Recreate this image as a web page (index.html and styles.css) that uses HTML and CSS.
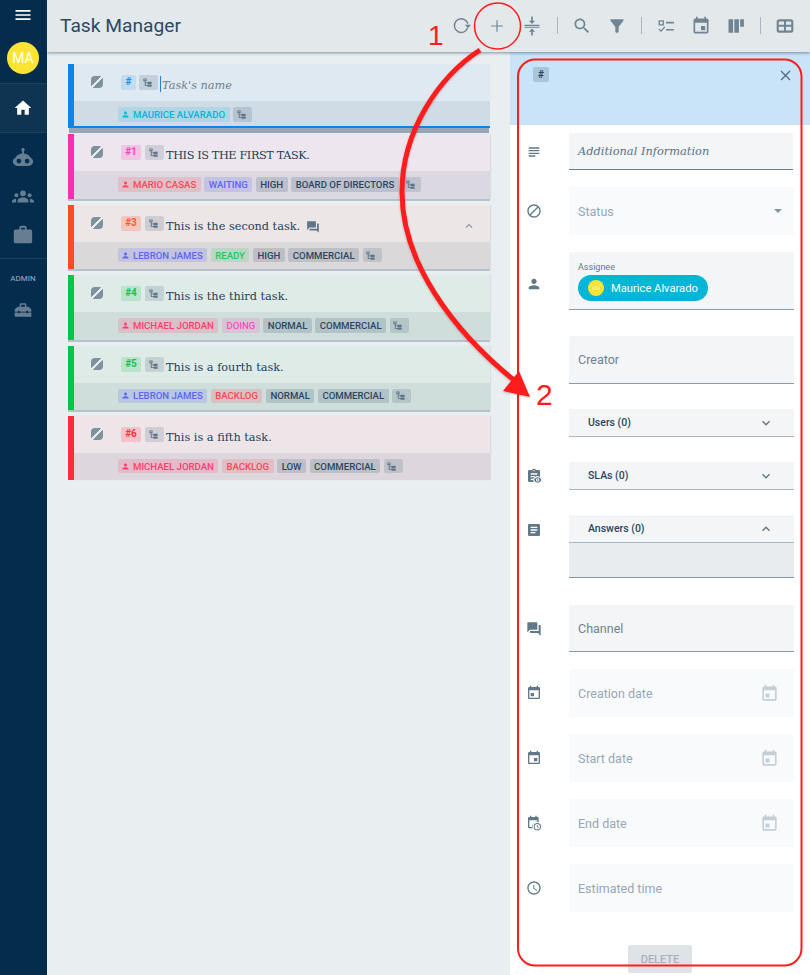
FILE: index.html
```html
<!DOCTYPE html>
<html lang="en">
<head>
<meta charset="utf-8">
<title>Task Manager</title>
<link rel="stylesheet" href="styles.css">
</head>
<body>
<svg class="defs" width="0" height="0" aria-hidden="true">
  <defs>
    <symbol id="i-menu" viewBox="0 0 24 24"><path d="M3 18h18v-2H3v2zm0-5h18v-2H3v2zm0-7v2h18V6H3z"/></symbol>
    <symbol id="i-home" viewBox="0 0 24 24"><path d="M10 20v-6h4v6h5v-8h3L12 3 2 12h3v8z"/></symbol>
    <symbol id="i-robot" viewBox="0 0 24 24"><path fill-rule="evenodd" d="M12 1.200a1.900 1.900 0 0 1 1 3.500V7c3.600.3 6.300 2.200 7.300 4.700 1.600.9 2.700 2.300 2.700 4 0 2.800-2.700 5-6 5H7c-3.300 0-6-2.200-6-5 0-1.700 1.100-3.100 2.700-4C4.700 9.200 7.400 7.300 11 7V4.700a1.900 1.900 0 0 1 1-3.500zM7.500 12.800a2.600 2.600 0 1 0 0 5.200 2.600 2.600 0 0 0 0-5.200zm9 0a2.600 2.600 0 1 0 0 5.200 2.600 2.600 0 0 0 0-5.200z"/></symbol>
    <symbol id="i-groups" viewBox="0 0 24 24"><circle cx="12" cy="8" r="3.200"/><circle cx="4.800" cy="10" r="2.200"/><circle cx="19.200" cy="10" r="2.200"/><path d="M6 18v-1.500c0-2.300 2.700-4 6-4s6 1.700 6 4V18H6zM0 18v-1.300c0-1.500 1.700-2.700 4.500-2.900C4.800 14.500 4.400 15.500 4.400 16.500V18H0zM24 18v-1.300c0-1.500-1.700-2.700-4.500-2.900.3.700.1 1.700.1 2.700V18H24z"/></symbol>
    <symbol id="i-work" viewBox="0 0 24 24"><path d="M20 6h-4V4c0-1.110-.89-2-2-2h-4c-1.110 0-2 .89-2 2v2H4c-1.110 0-1.990.89-1.990 2L2 19c0 1.110.89 2 2 2h16c1.110 0 2-.89 2-2V8c0-1.110-.89-2-2-2zm-6 0h-4V4h4v2z"/></symbol>
    <symbol id="i-toolbox" viewBox="0 0 24 24"><path d="M8 8V5.500C8 4.700 8.700 4 9.500 4h5c.8 0 1.500.7 1.500 1.500V8h2.500L22 11.500V14h-4v-1h-2v1H8v-1H6v1H2v-2.500L5.500 8H8zm1.800 0h4.400V5.800H9.800V8zM2 15h4v1h2v-1h8v1h2v-1h4v5H2v-5z"/></symbol>
    <symbol id="i-tree" viewBox="0 0 24 24"><path d="M3 3h7v6H8v3h4v-1.500h9V15h-9v-1.500H8V18h4v-1.500h9V21h-9v-1.500H6V9H3V3zm2 2v2h3V5H5z"/></symbol>
    <symbol id="i-person" viewBox="0 0 24 24"><path d="M12 12c2.210 0 4-1.790 4-4s-1.790-4-4-4-4 1.790-4 4 1.790 4 4 4zm0 2c-2.670 0-8 1.340-8 4v2h16v-2c0-2.660-5.330-4-8-4z"/></symbol>
    <symbol id="i-forum" viewBox="0 0 24 24"><path d="M21 6h-2v9H6v2c0 .55.45 1 1 1h11l4 4V7c0-.55-.45-1-1-1zm-4 6V3c0-.55-.45-1-1-1H3c-.55 0-1 .45-1 1v14l4-4h10c.55 0 1-.45 1-1z"/></symbol>
    <symbol id="i-less" viewBox="0 0 24 24"><path d="M12 8l-6 6 1.410 1.410L12 10.830l4.590 4.580L18 14z"/></symbol>
    <symbol id="i-more" viewBox="0 0 24 24"><path d="M16.590 8.590L12 13.170 7.410 8.590 6 10l6 6 6-6z"/></symbol>
    <symbol id="i-event" viewBox="0 0 24 24"><path d="M17 12h-5v5h5v-5zM16 1v2H8V1H6v2H5c-1.110 0-1.990.9-1.990 2L3 19c0 1.100.89 2 2 2h14c1.100 0 2-.9 2-2V5c0-1.100-.9-2-2-2h-1V1h-2zm3 18H5V8h14v11z"/></symbol>
    <symbol id="i-event-l" viewBox="0 0 24 24"><path d="M12 12H7v5h5v-5zM16 1v2H8V1H6v2H5c-1.110 0-1.990.9-1.990 2L3 19c0 1.100.89 2 2 2h14c1.100 0 2-.9 2-2V5c0-1.100-.9-2-2-2h-1V1h-2zm3 18H5V8h14v11z"/></symbol>
    <symbol id="i-block" viewBox="0 0 24 24"><path d="M12 2C6.480 2 2 6.480 2 12s4.480 10 10 10 10-4.480 10-10S17.520 2 12 2zM4 12c0-4.420 3.580-8 8-8 1.850 0 3.550.63 4.900 1.690L5.690 16.900C4.630 15.550 4 13.850 4 12zm8 8c-1.850 0-3.550-.63-4.900-1.690L18.310 7.100C19.370 8.450 20 10.150 20 12c0 4.420-3.580 8-8 8z"/></symbol>
  </defs>
</svg>

<div class="app">
  <nav class="sidebar">
    <button class="side-menu"><svg class="ic-20"><use href="#i-menu"/></svg></button>
    <div class="side-avatar">MA</div>
    <a class="side-home"><svg class="ic-20"><use href="#i-home"/></svg></a>
    <div class="side-group">
      <a class="side-link"><svg class="ic-22"><use href="#i-robot"/></svg></a>
      <a class="side-link"><svg class="ic-22"><use href="#i-groups"/></svg></a>
      <a class="side-link"><svg class="ic-22"><use href="#i-work"/></svg></a>
    </div>
    <div class="side-admin">
      <div class="side-label">ADMIN</div>
      <a class="side-link"><svg class="ic-20"><use href="#i-toolbox"/></svg></a>
    </div>
  </nav>

  <div class="main">
    <header class="topbar">
      <h1 class="title">Task Manager</h1>
      <div class="tools">
        <svg class="tool tool-refresh" viewBox="0 0 24 24"><path class="thin thin-bold" d="M18.700 14.500A8.200 8.200 0 1 1 16.800 5.700L19.300 9"/><path d="M22.800 10.500h-7.400l3.700 4.300z" class="solid"/></svg>
        <svg class="tool tool-add" viewBox="0 0 24 24"><path class="thin" d="M12 5v14M5 12h14"/></svg>
        <svg class="tool tool-compress" viewBox="0 0 24 24"><path d="M3 10.600h18v1.300H3zM3 12.900h18v1.300H3z" class="solid"/><path d="M12 9.700L8.300 5.800h2.700V.5h2v5.300h2.700zM12 15l3.700 3.900H13v4.600h-2v-4.600H8.300z" class="solid"/></svg>
        <span class="tool-sep tool-sep-a"></span>
        <svg class="tool tool-search" viewBox="0 0 24 24"><path class="solid" d="M15.500 14h-.79l-.28-.27C15.410 12.590 16 11.110 16 9.500 16 5.910 13.090 3 9.500 3S3 5.910 3 9.500 5.910 16 9.500 16c1.610 0 3.090-.59 4.230-1.570l.27.28v.79l5 4.990L20.490 19l-4.990-5zm-6 0C7.010 14 5 11.990 5 9.500S7.010 5 9.500 5 14 7.010 14 9.500 11.990 14 9.500 14z"/></svg>
        <svg class="tool tool-filter" viewBox="0 0 24 24"><path class="solid" d="M4.250 5.610C6.270 8.200 10 13 10 13v6c0 .55.45 1 1 1h2c.55 0 1-.45 1-1v-6s3.720-4.800 5.740-7.390c.51-.66.04-1.610-.79-1.610H5.040c-.83 0-1.300.95-.79 1.610z"/></svg>
        <span class="tool-sep tool-sep-b"></span>
        <svg class="tool tool-check" viewBox="0 0 24 24"><path class="solid" d="M3 5h6.500v6.500H3V5zm1.700 1.700v3.100h3.100V6.700H4.700zM12 7h9.500v2H12zM12 15.500h9.500v2H12zM3 16.200l1.100-1.100 1.900 1.900 4-4.400 1.100 1.100L6 19.300z"/></svg>
        <svg class="tool tool-cal" viewBox="0 0 24 24"><use href="#i-event" class="solid"/></svg>
        <svg class="tool tool-kanban" viewBox="0 0 24 24"><path class="solid" d="M3 4h5.500v16H3zM10 4h5.500v16H10zM17 4h4.500v9H17z"/></svg>
        <span class="tool-sep tool-sep-c"></span>
        <svg class="tool tool-table" viewBox="0 0 24 24"><path class="solid" d="M5 4h14a3 3 0 0 1 3 3v10a3 3 0 0 1-3 3H5a3 3 0 0 1-3-3V7a3 3 0 0 1 3-3zm.5 2.500a1 1 0 0 0-1 1v3h6.300v-4H5.500zm7.700 0v4h6.300v-3a1 1 0 0 0-1-1h-5.300zm-8.700 6.500v3.500a1 1 0 0 0 1 1h5.300V13H4.500zm8.700 0v4.500h5.300a1 1 0 0 0 1-1V13h-6.300z"/></svg>
      </div>
    </header>

    <div class="content">
      <section class="tasks">
        <article class="task task-new">
          <div class="task-top">
            <span class="status-btn"></span>
            <span class="num num-blue">#</span>
            <span class="tree-tag"><svg class="ic-tree"><use href="#i-tree"/></svg></span>
            <span class="cursor"></span><span class="task-name task-placeholder">Task's name</span>
          </div>
          <div class="task-tags">
            <span class="tag tag-cyan"><svg class="ic-person"><use href="#i-person"/></svg>MAURICE ALVARADO</span>
            <span class="tree-tag tree-tag-sm"><svg class="ic-tree"><use href="#i-tree"/></svg></span>
          </div>
        </article>

        <article class="task task-pink">
          <div class="task-top">
            <span class="status-btn"></span>
            <span class="num num-pink">#1</span>
            <span class="tree-tag"><svg class="ic-tree"><use href="#i-tree"/></svg></span>
            <span class="task-name task-name-caps">THIS IS THE FIRST TASK.</span>
          </div>
          <div class="task-tags">
            <span class="tag tag-red"><svg class="ic-person"><use href="#i-person"/></svg>MARIO CASAS</span>
            <span class="tag tag-indigo">WAITING</span>
            <span class="tag tag-gray">HIGH</span>
            <span class="tag tag-gray">BOARD OF DIRECTORS</span>
            <span class="tree-tag tree-tag-sm"><svg class="ic-tree"><use href="#i-tree"/></svg></span>
          </div>
        </article>

        <article class="task task-orange">
          <div class="task-top">
            <span class="status-btn"></span>
            <span class="num num-orange">#3</span>
            <span class="tree-tag"><svg class="ic-tree"><use href="#i-tree"/></svg></span>
            <span class="task-name">This is the second task.</span>
            <svg class="ic-forum"><use href="#i-forum"/></svg>
            <svg class="ic-collapse"><use href="#i-less"/></svg>
          </div>
          <div class="task-tags">
            <span class="tag tag-indigo"><svg class="ic-person"><use href="#i-person"/></svg>LEBRON JAMES</span>
            <span class="tag tag-green">READY</span>
            <span class="tag tag-gray">HIGH</span>
            <span class="tag tag-gray">COMMERCIAL</span>
            <span class="tree-tag tree-tag-sm"><svg class="ic-tree"><use href="#i-tree"/></svg></span>
          </div>
        </article>

        <article class="task task-green">
          <div class="task-top">
            <span class="status-btn"></span>
            <span class="num num-green">#4</span>
            <span class="tree-tag"><svg class="ic-tree"><use href="#i-tree"/></svg></span>
            <span class="task-name">This is the third task.</span>
          </div>
          <div class="task-tags">
            <span class="tag tag-rose"><svg class="ic-person"><use href="#i-person"/></svg>MICHAEL JORDAN</span>
            <span class="tag tag-magenta">DOING</span>
            <span class="tag tag-gray">NORMAL</span>
            <span class="tag tag-gray">COMMERCIAL</span>
            <span class="tree-tag tree-tag-sm"><svg class="ic-tree"><use href="#i-tree"/></svg></span>
          </div>
        </article>

        <article class="task task-green">
          <div class="task-top">
            <span class="status-btn"></span>
            <span class="num num-green">#5</span>
            <span class="tree-tag"><svg class="ic-tree"><use href="#i-tree"/></svg></span>
            <span class="task-name">This is a fourth task.</span>
          </div>
          <div class="task-tags">
            <span class="tag tag-indigo"><svg class="ic-person"><use href="#i-person"/></svg>LEBRON JAMES</span>
            <span class="tag tag-red">BACKLOG</span>
            <span class="tag tag-gray">NORMAL</span>
            <span class="tag tag-gray">COMMERCIAL</span>
            <span class="tree-tag tree-tag-sm"><svg class="ic-tree"><use href="#i-tree"/></svg></span>
          </div>
        </article>

        <article class="task task-red">
          <div class="task-top">
            <span class="status-btn"></span>
            <span class="num num-red">#6</span>
            <span class="tree-tag"><svg class="ic-tree"><use href="#i-tree"/></svg></span>
            <span class="task-name">This is a fifth task.</span>
          </div>
          <div class="task-tags">
            <span class="tag tag-rose"><svg class="ic-person"><use href="#i-person"/></svg>MICHAEL JORDAN</span>
            <span class="tag tag-red">BACKLOG</span>
            <span class="tag tag-gray">LOW</span>
            <span class="tag tag-gray">COMMERCIAL</span>
            <span class="tree-tag tree-tag-sm"><svg class="ic-tree"><use href="#i-tree"/></svg></span>
          </div>
        </article>
      </section>

      <aside class="panel">
        <div class="panel-head">
          <span class="panel-num">#</span>
          <svg class="panel-close"><path d="M1 1l9 9M10 1l-9 9"/></svg>
        </div>
        <div class="panel-body">
          <div class="row row-info">
            <svg class="row-ic" viewBox="0 0 24 24"><path d="M14 17H4v2h10v-2zm6-8H4v2h16V9zM4 15h16v-2H4v2zM4 5v2h16V5H4z"/></svg>
            <div class="field field-info"><span class="info-text">Additional Information</span></div>
          </div>
          <div class="row row-status">
            <svg class="row-ic"><use href="#i-block"/></svg>
            <div class="field field-disabled field-tall"><span class="ph ph-light">Status</span><span class="caret"></span></div>
          </div>
          <div class="row row-assignee">
            <svg class="row-ic row-ic-low"><use href="#i-person"/></svg>
            <div class="field field-assignee">
              <span class="mini-label">Assignee</span>
              <span class="chip"><span class="chip-avatar">MA</span>Maurice Alvarado</span>
            </div>
          </div>
          <div class="row row-creator">
            <span class="row-ic"></span>
            <div class="field field-line field-tall"><span class="ph">Creator</span></div>
          </div>
          <div class="row row-users">
            <span class="row-ic"></span>
            <div class="acc"><span class="acc-title">Users (0)</span><svg class="acc-ic"><use href="#i-more"/></svg></div>
          </div>
          <div class="row row-slas">
            <svg class="row-ic" viewBox="0 0 24 24"><path d="M19 3h-4.200C14.400 1.800 13.300 1 12 1s-2.400.8-2.800 2H5a2 2 0 0 0-2 2v14a2 2 0 0 0 2 2h6.500a6 6 0 0 1 9.500-7V5a2 2 0 0 0-2-2zm-7 0c.5 0 1 .5 1 1s-.5 1-1 1-1-.5-1-1 .5-1 1-1zM7 8h10v2H7V8zm0 4h6v2H7v-2zm0 4h4v2H7v-2z"/><path d="M17.500 14c-2.500 0-4.700 1.500-5.500 4 .8 2.500 3 4 5.500 4s4.700-1.500 5.500-4c-.8-2.500-3-4-5.500-4zm0 6.500a2.500 2.500 0 1 1 0-5 2.500 2.500 0 0 1 0 5zm0-1.300a1.200 1.200 0 1 0 0-2.400 1.200 1.200 0 0 0 0 2.400z"/></svg>
            <div class="acc"><span class="acc-title">SLAs (0)</span><svg class="acc-ic"><use href="#i-more"/></svg></div>
          </div>
          <div class="row row-answers">
            <svg class="row-ic" viewBox="0 0 24 24"><path d="M19 3H5c-1.100 0-2 .9-2 2v14c0 1.100.9 2 2 2h14c1.100 0 2-.9 2-2V5c0-1.100-.9-2-2-2zm-5 14H7v-2h7v2zm3-4H7v-2h10v2zm0-4H7V7h10v2z"/></svg>
            <div class="acc-wrap">
              <div class="acc"><span class="acc-title">Answers (0)</span><svg class="acc-ic"><use href="#i-less"/></svg></div>
              <div class="acc-body"></div>
            </div>
          </div>
          <div class="row row-channel">
            <svg class="row-ic"><use href="#i-forum"/></svg>
            <div class="field field-line field-channel"><span class="ph">Channel</span></div>
          </div>
          <div class="row row-date">
            <svg class="row-ic"><use href="#i-event-l"/></svg>
            <div class="field field-disabled field-tall"><span class="ph ph-light">Creation date</span><svg class="field-cal"><use href="#i-event-l"/></svg></div>
          </div>
          <div class="row row-date">
            <svg class="row-ic"><use href="#i-event"/></svg>
            <div class="field field-disabled field-tall"><span class="ph ph-light">Start date</span><svg class="field-cal"><use href="#i-event-l"/></svg></div>
          </div>
          <div class="row row-date">
            <svg class="row-ic" viewBox="0 0 24 24"><path d="M8 1v2h6V1h2v2h1c1.100 0 2 .9 2 2v6.200a6.500 6.500 0 0 0-8.800 8.800H5c-1.100 0-2-.9-2-2V5c0-1.100.9-2 2-2h1V1h2zM5 8v10h5.100A6.500 6.500 0 0 1 17 10.100V8H5z"/><path d="M17 12a5.500 5.500 0 1 0 0 11 5.500 5.500 0 0 0 0-11zm0 9.500a4 4 0 1 1 0-8 4 4 0 0 1 0 8zm.5-6.500h-1.200v3l2.300 1.400.6-.9-1.700-1.100V15z"/></svg>
            <div class="field field-disabled field-tall"><span class="ph ph-light">End date</span><svg class="field-cal"><use href="#i-event-l"/></svg></div>
          </div>
          <div class="row row-date">
            <svg class="row-ic" viewBox="0 0 24 24"><path d="M11.990 2C6.470 2 2 6.480 2 12s4.470 10 9.990 10C17.520 22 22 17.520 22 12S17.520 2 11.990 2zM12 20c-4.420 0-8-3.580-8-8s3.580-8 8-8 8 3.580 8 8-3.580 8-8 8zm.5-13H11v6l5.250 3.150.75-1.230-4.500-2.670z"/></svg>
            <div class="field field-disabled field-tall"><span class="ph ph-light">Estimated time</span></div>
          </div>
          <div class="panel-foot"><button class="btn-delete">DELETE</button></div>
        </div>
      </aside>
    </div>
  </div>

  <svg class="notes" viewBox="0 0 810 975" aria-hidden="true">
    <defs>
      <filter id="soft" x="-10%" y="-10%" width="120%" height="120%"><feDropShadow dx="0" dy="1" stdDeviation="1" flood-color="#000" flood-opacity=".25"/></filter>
    </defs>
    <circle class="note-thin" cx="497.500" cy="26" r="23"/>
    <rect class="note-frame" x="518" y="59.500" width="283.500" height="906" rx="17"/>
    <g filter="url(#soft)">
      <path class="note-arrow" d="M480 50C440 76 402 130 402 192C402 262 452 330 515 381"/>
      <path class="note-head" d="M530 397L503 391L519 371Z"/>
    </g>
  </svg>
  <span class="note-num note-one">1</span>
  <span class="note-num note-two">2</span>
</div>
</body>
</html>
```

FILE: styles.css
```css
* { box-sizing: border-box; }
html, body { margin: 0; padding: 0; }
body { font-family: Roboto, "Liberation Sans", sans-serif; color: #1f3d58; background: #e9eef1; }
.defs { position: absolute; }
button { border: 0; padding: 0; background: none; font: inherit; }

.app { position: relative; display: flex; width: 810px; height: 975px; overflow: hidden; }

/* sidebar */
.sidebar { flex: 0 0 47px; display: flex; flex-direction: column; align-items: stretch; padding-right: 1px; background: #042c4c; color: #667e92; fill: #667e92; }
.ic-20 { width: 20px; height: 20px; display: block; }
.ic-22 { width: 22px; height: 22px; display: block; }
.side-menu { height: 30px; display: flex; align-items: center; justify-content: center; fill: #fff; }
.side-avatar { width: 32px; height: 32px; margin: 12px auto 9px; border-radius: 50%; background: #fde433; color: #fff; font-size: 14px; line-height: 32px; text-align: center; }
.side-home { height: 50px; margin-right: -1px; padding-right: 1px; display: flex; align-items: center; justify-content: center; background: #0e3452; border-top: 1px solid #1c4160; border-bottom: 1px solid #1c4160; fill: #fff; }
.side-group { margin-right: -1px; padding: 6px 1px 0 0; height: 126px; border-bottom: 1px solid #1c4160; }
.side-link { height: 38.500px; display: flex; align-items: center; justify-content: center; }
.side-admin { padding-top: 14px; }
.side-label { font-size: 8px; line-height: 11px; text-align: center; color: #9fb0bd; margin-bottom: 7px; }

/* top bar */
.main { flex: 1; display: flex; flex-direction: column; min-width: 0; }
.topbar { position: relative; z-index: 2; flex: 0 0 52px; display: flex; align-items: center; justify-content: space-between; padding: 0 15px 1px 13px; background: #e3e8eb; box-shadow: 0 1px 3px rgba(40, 70, 95, .55); }
.title { margin: 0; font-size: 19.200px; font-weight: 400; color: #2a4a64; line-height: 1; }
.tools { display: flex; align-items: center; }
.tool { width: 20px; height: 20px; display: block; flex: none; fill: #6f8594; }
.solid { fill: #6f8594; }
.thin { fill: none; stroke: #6f8594; stroke-width: 1.400; }
.thin-bold { stroke-width: 1.700; }
.tool-add { margin-left: 15px; }
.tool-compress { margin-left: 15px; }
.tool-sep { width: 1px; height: 17px; background: #aab7c0; flex: none; }
.tool-sep-a { margin-left: 15px; }
.tool-search { margin-left: 14px; }
.tool-filter { margin-left: 15px; }
.tool-sep-b { margin-left: 14px; }
.tool-check { margin-left: 14px; }
.tool-cal { margin-left: 15px; }
.tool-kanban { margin-left: 15px; }
.tool-sep-c { margin-left: 14px; }
.tool-table { margin-left: 14px; }

/* task list */
.content { flex: 1; display: flex; min-height: 0; }
.tasks { width: 463px; padding: 12px 0 0 21px; flex: none; }
.task { position: relative; width: 422px; height: 64.400px; margin-bottom: 6px; border-left: 6px solid; box-shadow: 0 2px 0 rgba(120, 140, 160, .45), 1px 0 1px rgba(150, 165, 180, .2); display: flex; flex-direction: column; }
.task-new { height: 62px; margin-bottom: 8.400px; border-left-color: #0c84e8; background: #dfe9f1; box-shadow: 0 2px 0 #0c84e8, 0 8px 0 -1px #95a7b4; }
.task-pink { border-left-color: #ff2eb0; background: #ede6ee; }
.task-orange { border-left-color: #ff4a24; background: #ece6e6; }
.task-green { border-left-color: #00c64a; background: #dfebe7; }
.task-red { border-left-color: #ff2a3a; background: #eee5e9; box-shadow: 1px 0 1px rgba(150, 165, 180, .2); }
.task-top { flex: 0 0 37px; display: flex; align-items: flex-start; position: relative; padding-top: 11px; }
.task-tags { flex: 1; display: flex; align-items: flex-start; gap: 3.500px; padding: 6px 0 0 44px; background: rgba(4, 44, 76, .07); }
.status-btn { flex: none; width: 12px; height: 12px; margin: 1px 18px 0 17px; border-radius: 4px; background: linear-gradient(135deg, #7e919f 0 43%, #e8ecef 43% 55%, #7e919f 55%); }
.num { flex: none; min-width: 15px; height: 15px; padding: 0 4px; margin-right: 4px; border-radius: 2px; font-size: 10px; font-weight: 700; line-height: 14px; text-align: center; }
.num-blue { color: #1a8ff0; background: rgba(26, 143, 240, .15); width: 15px; padding: 0; margin-right: 3px; }
.num-pink { color: #ff3fc0; background: rgba(255, 63, 192, .2); width: 20px; padding: 0; }
.num-orange { color: #ff5a30; background: rgba(255, 90, 48, .22); width: 20px; padding: 0; }
.num-green { color: #14c455; background: rgba(20, 196, 85, .18); width: 20px; padding: 0; }
.num-red { color: #ff3344; background: rgba(255, 51, 68, .18); width: 20px; padding: 0; }
.tree-tag { flex: none; width: 19px; height: 15px; display: flex; align-items: center; justify-content: center; padding-right: 3px; border-radius: 2px; background: rgba(4, 44, 76, .13); fill: #5f7587; }
.tree-tag-sm { height: 14.500px; }
.ic-tree { width: 11px; height: 11px; display: block; }
.task-name { flex: none; margin-left: 2px; margin-top: 3px; font-family: "DejaVu Serif", "Liberation Serif", serif; font-size: 11.300px; line-height: 16px; color: #22405a; }
.task-name-caps { letter-spacing: -.4px; }
.task-placeholder { margin-left: 1px; font-style: italic; color: #6b7f90; }
.cursor { flex: none; width: 1px; height: 16px; margin: 1px 0 0 2px; background: #1a84e6; }
.ic-forum { flex: none; width: 14px; height: 14px; margin: 4px 0 0 6px; fill: #5f7587; }
.ic-collapse { position: absolute; right: 14px; top: 14px; width: 14px; height: 14px; fill: #7f93a2; }
.tag { flex: none; display: flex; align-items: center; height: 14.500px; padding: 0 4.500px; border-radius: 2px; font-size: 9.600px; font-weight: 500; line-height: 15px; white-space: nowrap; }
.ic-person { width: 9px; height: 9px; margin: 0 3.500px 0 -2px; display: block; }
.tag-cyan { color: #00b7d6; background: rgba(0, 183, 214, .15); fill: #00b7d6; }
.tag-red { color: #ff4757; background: rgba(255, 71, 87, .18); fill: #ff4757; }
.tag-rose { color: #ff3d6e; background: rgba(255, 61, 110, .18); fill: #ff3d6e; }
.tag-indigo { color: #5b66f5; background: rgba(91, 102, 245, .18); fill: #5b66f5; }
.tag-green { color: #1cc95a; background: rgba(28, 201, 90, .16); }
.tag-magenta { color: #ff4cc0; background: rgba(255, 76, 192, .18); }
.tag-gray { color: #2a4661; background: rgba(4, 44, 76, .14); }

/* detail panel */
.panel { flex: 1; display: flex; flex-direction: column; min-width: 0; background: #fff; }
.panel-head { position: relative; flex: 0 0 73px; background: #c9e3f8; }
.panel-num { position: absolute; left: 23px; top: 15px; width: 16px; height: 15px; border-radius: 2px; background: rgba(4, 44, 76, .16); color: #2a4661; font-size: 10px; font-weight: 700; line-height: 15px; text-align: center; }
.panel-close { position: absolute; right: 19px; top: 18px; width: 11px; height: 11px; fill: none; stroke: #51697c; stroke-width: 1.300; }
.panel-body { flex: 1; padding: 8px 16px 0 0; }
.row { display: flex; align-items: center; }
.row-ic { flex: none; width: 16px; height: 16px; margin: 0 27px 0 16px; fill: #617888; display: block; }
.row-ic-low { margin-top: 6px; }
.field { flex: 1; position: relative; display: flex; align-items: center; padding: 0 9px; border-radius: 2px 2px 0 0; background: #f4f5f7; }
.field-tall { height: 48px; }
.field-channel { height: 47px; }
.field-line { border-bottom: 1px solid #8a9aa7; }
.field-disabled { background: #f9fafb; }
.field-info { height: 37px; margin-right: 1px; border-bottom: 1px solid #6d7f8d; }
.info-text { font-family: "DejaVu Serif", "Liberation Serif", serif; font-style: italic; font-size: 11.400px; color: #5d7385; }
.ph { font-size: 12.500px; color: #6f8293; }
.ph-light { color: #98a7b4; }
.row-status { margin-top: 17px; }
.row-assignee { margin-top: 17px; }
.field-assignee { height: 58px; flex-direction: column; align-items: flex-start; padding-top: 10px; border-bottom: 1px solid #8a9aa7; }
.mini-label { font-size: 9px; line-height: 10px; color: #64798a; }
.chip { display: flex; align-items: center; height: 26px; margin-top: 3px; padding: 0 10px; border-radius: 13px; background: #00b6d6; color: #fff; font-size: 11.200px; }
.chip-avatar { width: 16px; height: 16px; margin-right: 7px; border-radius: 50%; background: #fde433; color: #f7f2b5; font-size: 6px; line-height: 16px; text-align: center; }
.caret { position: absolute; right: 12px; top: 22px; border: 4px solid transparent; border-top: 4px solid #8295a4; border-bottom: 0; }
.row-creator { margin-top: 26px; }
.row-users { margin-top: 25px; }
.row-slas { margin-top: 25px; }
.row-answers { margin-top: 25px; align-items: flex-start; }
.row-answers .row-ic { margin-top: 7px; }
.acc-wrap { flex: 1; min-width: 0; }
.acc { flex: 1; height: 28px; display: flex; align-items: center; justify-content: space-between; padding: 0 20px 0 19px; background: #f4f5f7; border-bottom: 1px solid #a9b6c2; }
.acc-title { font-size: 10.500px; font-weight: 500; color: #2a4661; }
.acc-ic { width: 16px; height: 16px; fill: #617888; display: block; }
.acc-body { height: 35px; background: #e9ecef; border-bottom: 1px solid #8295a4; }
.row-channel { margin-top: 27px; }
.row-date { margin-top: 17px; }
.field-cal { position: absolute; right: 15px; top: 15px; width: 19px; height: 19px; fill: #c3ced6; }
.panel-foot { display: flex; justify-content: center; padding: 33px 0 0 16px; }
.btn-delete { width: 64px; height: 28px; border-radius: 2px; background: #dfe3e7; color: #a6b2bc; font-size: 11px; font-weight: 500; }

/* annotations drawn over the screenshot */
.notes { position: absolute; left: 0; top: 0; width: 810px; height: 975px; pointer-events: none; z-index: 5; }
.note-thin { fill: none; stroke: #ff1d1d; stroke-width: 1.500; }
.note-frame { fill: none; stroke: #ff1d1d; stroke-width: 2; }
.note-arrow { fill: none; stroke: #ff1d1d; stroke-width: 5; }
.note-head { fill: #ff1d1d; }
.note-num { position: absolute; z-index: 6; font-family: "Liberation Sans", Arial, sans-serif; font-size: 30px; line-height: 30px; color: #ff1d1d; }
.note-one { left: 428px; top: 21px; font-size: 28px; }
.note-two { left: 536px; top: 380px; }
```
